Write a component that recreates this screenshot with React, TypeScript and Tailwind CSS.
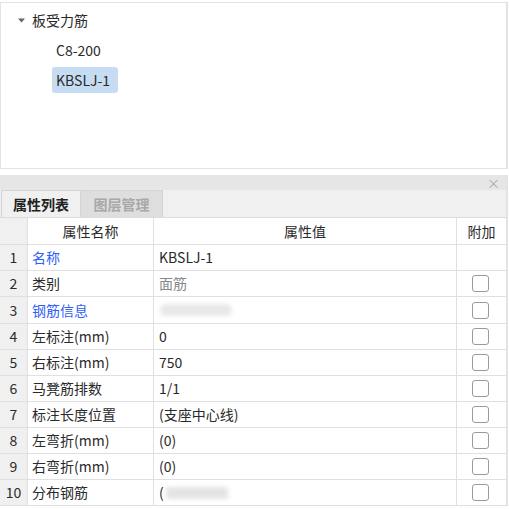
import React from "react";

const rows = [
  { n: 1, name: "名称", link: true, value: "KBSLJ-1", check: false },
  { n: 2, name: "类别", value: "面筋", muted: true, check: true },
  { n: 3, name: "钢筋信息", link: true, value: "", blur: "a", check: true },
  { n: 4, name: "左标注(mm)", value: "0", check: true },
  { n: 5, name: "右标注(mm)", value: "750", check: true },
  { n: 6, name: "马凳筋排数", value: "1/1", check: true },
  { n: 7, name: "标注长度位置", value: "(支座中心线)", check: true },
  { n: 8, name: "左弯折(mm)", value: "(0)", check: true },
  { n: 9, name: "右弯折(mm)", value: "(0)", check: true },
  { n: 10, name: "分布钢筋", value: "(", blur: "b", check: true },
];

const App = () => {
  return (
    <div
      className="w-[509px] h-[509px] bg-white overflow-hidden text-[14px] text-[#2a2a2a]"
      style={{ fontFamily: '"Noto Sans CJK SC", "Noto Sans", sans-serif' }}
    >
      {/* Tree panel */}
      <div className="mt-[2px] w-[508px] h-[167px] border border-[#e3e3e3] border-r-2">
        <div className="pt-[5px] pl-[16px]">
          <div className="flex items-center h-[24px]">
            <svg width="9" height="9" viewBox="0 0 9 9" className="mr-[6px] mt-[1px]">
              <path d="M1 2.5 L8 2.5 L4.5 6.5 Z" fill="#666" />
            </svg>
            <span>板受力筋</span>
          </div>
          <div className="pl-[39px] mt-[6px] h-[24px] leading-[24px]">C8-200</div>
          <div className="pl-[35px] mt-[5px]">
            <span className="inline-block pl-[4px] w-[66px] h-[26px] leading-[26px] rounded-[3px] bg-[#c6dcf2]">
              KBSLJ-1
            </span>
          </div>
        </div>
      </div>

      {/* Property panel */}
      <div className="mt-[6px] w-[508px] border-r-2 border-[#e3e3e3]">
        <div className="h-[15px] bg-[#e6e6e6] flex items-center justify-end pr-[6px]">
          <span className="text-[13px] leading-none text-[#aaa]">×</span>
        </div>
        <div className="h-[28px] bg-[#f0f0f0] flex items-end pl-[1px] border-b border-[#dcdcdc]">
          <div className="w-[80px] h-[27px] flex items-center justify-center font-bold text-[#222] bg-[#f0f0f0] border border-b-0 border-[#d4d4d4]">
            属性列表
          </div>
          <div className="w-[82px] h-[27px] flex items-center justify-center font-bold text-[#a8a8a8] bg-[#dedede] border border-b-0 border-l-0 border-[#d4d4d4]">
            图层管理
          </div>
        </div>
        <div className="grid grid-cols-[28px_126px_303px_49px] bg-white">
          <div className="h-[27px] bg-[#f0f0f0] border-r border-b border-[#e0e0e0]" />
          <div className="h-[27px] flex items-center justify-center border-r border-b border-[#e0e0e0]">属性名称</div>
          <div className="h-[27px] flex items-center justify-center border-r border-b border-[#e0e0e0]">属性值</div>
          <div className="h-[27px] flex items-center justify-center border-b border-[#e0e0e0]">附加</div>
          {rows.map((r) => {
            const h = r.n === 3 ? "h-[27px]" : "h-[26px]";
            return (
              <React.Fragment key={r.n}>
                <div className={h + " bg-[#f0f0f0] flex items-center justify-center border-r border-b border-[#e0e0e0]"}>
                  {r.n}
                </div>
                <div
                  className={
                    h + " flex items-center pl-[4px] border-r border-b border-[#e0e0e0] " +
                    (r.link ? "text-[#2f5ff5]" : "")
                  }
                >
                  {r.name}
                </div>
                <div
                  className={
                    h + " flex items-center pl-[5px] border-r border-b border-[#e0e0e0] " +
                    (r.muted ? "text-[#888]" : "")
                  }
                >
                  {r.value}
                  {r.blur === "a" && (
                    <div className="ml-[1px] w-[72px] h-[12px] rounded-[6px] bg-[#e8e8e8] blur-[2px]" />
                  )}
                  {r.blur === "b" && (
                    <div className="ml-[2px] w-[62px] h-[12px] bg-[#e4e4e4] blur-[2px]" />
                  )}
                </div>
                <div className={h + " flex items-center justify-center pr-[2px] border-b border-[#e0e0e0]"}>
                  {r.check && (
                    <div className="w-[17px] h-[17px] rounded-[3px] border border-[#9a9a9a] bg-white" />
                  )}
                </div>
              </React.Fragment>
            );
          })}
        </div>
      </div>
    </div>
  );
};

export default App;
